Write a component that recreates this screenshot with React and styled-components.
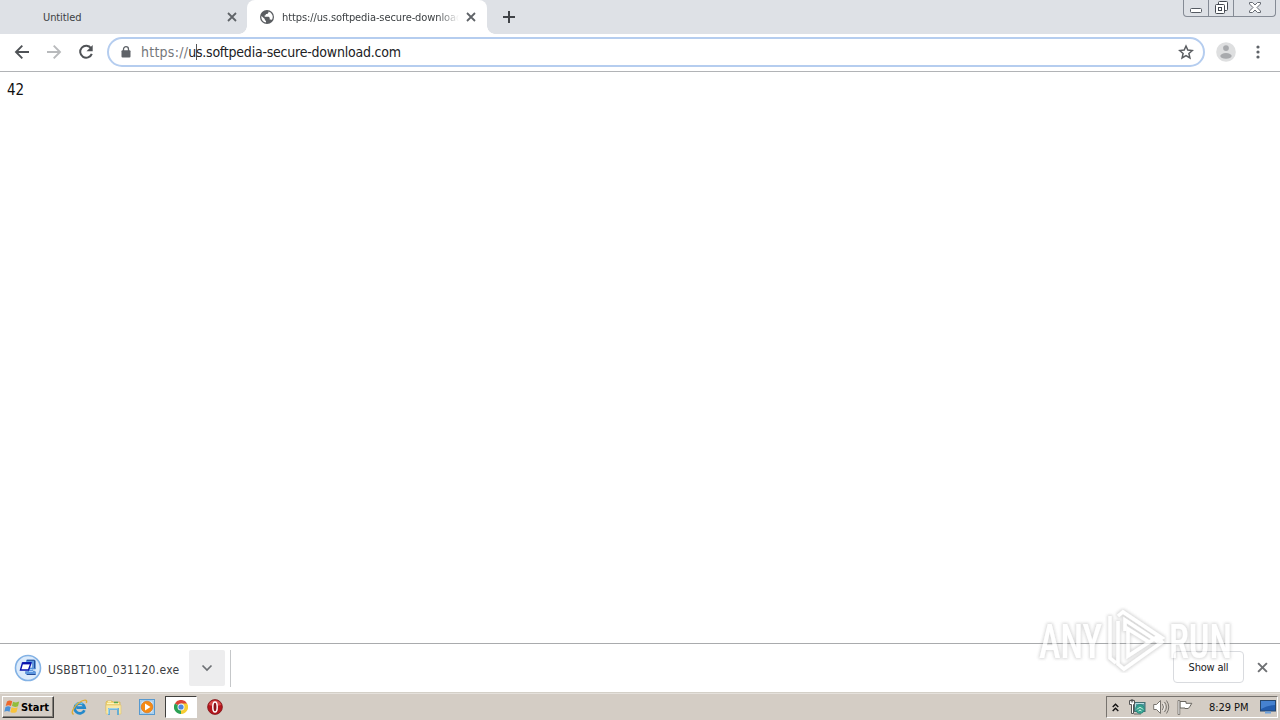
import React from "react";
import styled, { createGlobalStyle } from "styled-components";

const GlobalStyle = createGlobalStyle`
  body {
    margin: 0;
    overflow: hidden;
    background: #fff;
    font-family: "DejaVu Sans Condensed", "DejaVu Sans", sans-serif;
    font-stretch: condensed;
  }

  * {
    box-sizing: border-box;
  }

  svg {
    display: block;
    flex-shrink: 0;
  }
`;

const CloseIcon = ({ size = 10, color = "#5f6368" }) => (
  <svg width={size} height={size} viewBox="0 0 10 10">
    <path d="M1 1l8 8M9 1L1 9" stroke={color} strokeWidth="1.8" />
  </svg>
);

const GlobeIcon = () => (
  <svg width="14" height="14" viewBox="0 0 14 14">
    <circle cx="7" cy="7" r="7" fill="#5a5d61" />
    <path d="M1.500 6l3.300 3v1l1.200 1v1.600C3.300 12.200 1.300 9.800 1.300 7z" fill="#fff" />
    <path d="M8.500 1.500v1L7.300 3.900H5.800v1.400H4.700v1.400h4l1 1v1.900h1.500l.6.500a5.700 5.700 0 0 0-3.300-8.600z" fill="#fff" />
  </svg>
);

const BackIcon = ({ color = "#4f5256", flip }) => (
  <svg width="16" height="16" viewBox="0 0 16 16">
    <path
      d="M15 8H2M8.300 1.700L2 8l6.300 6.300"
      transform={flip ? "translate(16 0) scale(-1 1)" : undefined}
      fill="none"
      stroke={color}
      strokeWidth="1.900"
    />
  </svg>
);

const ReloadIcon = () => (
  <svg width="16" height="16" viewBox="0 0 16 16">
    <path d="M13.100 4.300A6 6 0 1 0 13.800 9.800" fill="none" stroke="#4f5256" strokeWidth="2" />
    <path d="M14.700 1v6.200H8.500z" fill="#4f5256" />
  </svg>
);

const LockIcon = () => (
  <svg width="10" height="12" viewBox="0 0 10 12">
    <path d="M2.500 5V3.200a2.500 2.500 0 0 1 5 0V5" fill="none" stroke="#5f6368" strokeWidth="1.300" />
    <rect x="0.500" y="4.300" width="9" height="7.200" rx="1" fill="#5f6368" />
  </svg>
);

const StarIcon = () => (
  <svg width="16" height="16" viewBox="0 0 16 16">
    <path
      d="M8 2l1.800 4.100 4.500.4-3.400 3 1 4.400L8 11.600l-3.900 2.300 1-4.400-3.400-3 4.500-.4z"
      fill="none"
      stroke="#5a5d61"
      strokeWidth="1.500"
    />
  </svg>
);

const AvatarIcon = () => (
  <svg width="20" height="20" viewBox="0 0 20 20">
    <circle cx="10" cy="10" r="9.800" fill="#dedfe0" />
    <circle cx="10" cy="6.100" r="2.900" fill="#a8aaad" />
    <ellipse cx="10" cy="13.900" rx="5.700" ry="2.800" fill="#a8aaad" />
  </svg>
);

const DotsIcon = () => (
  <svg width="4" height="14" viewBox="0 0 4 14">
    <circle cx="2" cy="2" r="1.600" fill="#5f6368" />
    <circle cx="2" cy="7" r="1.600" fill="#5f6368" />
    <circle cx="2" cy="12" r="1.600" fill="#5f6368" />
  </svg>
);

const MinimizeIcon = () => (
  <svg width="12" height="5" viewBox="0 0 12 5">
    <rect x="0.500" y="0.500" width="11" height="4" rx="1" fill="#fff" stroke="#555a62" />
  </svg>
);

const RestoreIcon = () => (
  <svg width="13" height="13" viewBox="0 0 13 13">
    <rect x="3.500" y="0.500" width="9" height="9" rx="1" fill="#fff" stroke="#444951" />
    <rect x="0.500" y="3.500" width="9" height="9" rx="1" fill="#fff" stroke="#444951" />
    <rect x="3.500" y="6.500" width="3" height="3" fill="#fff" stroke="#444951" />
  </svg>
);

const WindowCloseIcon = () => (
  <svg width="12" height="11" viewBox="0 0 12 11">
    <path
      d="M.5.500h3L6 3 8.500.500h3v1.500L8 5.500l3.500 3.500v1.500h-3L6 8l-2.500 2.500h-3V9L4 5.500.500 2z"
      fill="#fff"
      stroke="#666b73"
    />
  </svg>
);

// self-extracting archive: window and blue clamp in a round badge
const InstallerIcon = () => (
  <svg width="28" height="28" viewBox="0 0 28 28">
    <circle cx="14" cy="14" r="12.500" fill="#dcebfb" stroke="#83b2e5" strokeWidth="1.600" />
    <path d="M12.500 6h8l1 1v8h-3v2h2l1 1v2.500h-9l-1-1v-2h3V14h4V9h-6z" fill="#5c97e0" stroke="#4a84cc" strokeWidth=".6" />
    <path d="M13 6.300h7.500v8M13 20.500h8.500" fill="none" stroke="#234c99" />
    <path d="M15 17.500h4M15.500 15.500h3" stroke="#abd0f8" />
    <path d="M8.500 9h8.500l-2.500 7H6.500z" fill="#fff" stroke="#0812ae" strokeWidth="1.400" />
    <path d="M8.500 9.300H17" stroke="#0812ae" strokeWidth="2.200" />
  </svg>
);

const WindowsFlag = () => (
  <svg width="16" height="16" viewBox="0 0 16 16">
    <path d="M3 2.500Q5.500.700 8.200 2.300L7 7Q4.500 5.600 1.700 7z" fill="#ed682b" />
    <path d="M9 2.700q3 1.400 6.200-.1L14 7.200q-3 1.500-6-.1z" fill="#91bd3d" />
    <path d="M1.500 8Q4.200 6.600 6.700 8L5.500 12.700Q3 11.400.3 12.800z" fill="#4b91d7" />
    <path d="M7.600 8.200q3.100 1.400 6.100 0l-1.200 4.800q-3.200 1.700-6.100 0z" fill="#f8c33c" />
  </svg>
);

const ExplorerIcon = () => (
  <svg width="17" height="17" viewBox="0 0 17 17">
    <path
      d="M13.400 11.200A5 5 0 1 1 13.700 8.700H5.500"
      fill="none"
      stroke="#2489cb"
      strokeWidth="2.700"
    />
    <path d="M4.500 6a5 5 0 0 1 7-1" fill="none" stroke="#74cff0" strokeWidth="1.200" />
    <path d="M2.700 15.300C-1 14.500 3 7.200 8 3.700s8.800-3.500 7.300.400" fill="none" stroke="#dfad36" strokeWidth="1.400" />
  </svg>
);

const FolderIcon = () => (
  <svg width="17" height="17" viewBox="0 0 17 17">
    <path d="M1 3l1-1h5l1 1h7v9H1z" fill="#f1d675" stroke="#d4b451" strokeWidth=".7" />
    <path d="M2 4.500h12M3 2.700h3" stroke="#fff5bd" />
    <path d="M9 3.500h4" stroke="#57a84e" strokeWidth="1.500" />
    <path d="M1 6h15v9H1z" fill="#f8e8a6" stroke="#dfc56c" strokeWidth=".6" />
    <path d="M4 16v-6h9v6" fill="#d4cdc5" stroke="#67add4" strokeWidth="2" />
    <path d="M3.700 15V9.700h9" fill="none" stroke="#b9e2f3" strokeWidth=".8" />
  </svg>
);

const PlayerIcon = () => (
  <svg width="16" height="16" viewBox="0 0 16 16">
    <rect x=".5" y=".5" width="15" height="15" fill="#b6d8f2" stroke="#5799cf" />
    <rect x="2" y="2" width="12" height="12" fill="#d8eafa" stroke="#82b4db" strokeWidth=".6" />
    <circle cx="8" cy="8" r="5.800" fill="#f58a14" stroke="#d96c0b" strokeWidth=".6" />
    <path d="M6 4.500l5.500 3.500L6 11.500z" fill="#fff" />
  </svg>
);

const ChromeIcon = () => (
  <svg width="14" height="14" viewBox="0 0 14 14">
    <path d="M7 7L.9 3.500A7 7 0 0 1 13.100 3.500z" fill="#dc4436" />
    <path d="M7 7l6.100-3.500A7 7 0 0 1 7 14z" fill="#f7cd32" />
    <path d="M7 7v7A7 7 0 0 1 .9 3.500z" fill="#2ba154" />
    <path d="M7 3.500h6.100L10 8.700 7 14z" fill="#f7cd32" />
    <circle cx="7" cy="7" r="3.500" fill="#f4f5f7" />
    <circle cx="7" cy="7" r="2.600" fill="#4e87df" />
  </svg>
);

const OperaIcon = () => (
  <svg width="16" height="16" viewBox="0 0 16 16">
    <circle cx="8" cy="8" r="7.400" fill="#b5161c" stroke="#7d1519" strokeWidth=".8" />
    <path d="M1.800 6Q3 1.500 8 1.500T14.200 6Q8 8 1.800 6" fill="#d94d4b" />
    <ellipse cx="8" cy="8" rx="2.200" ry="5" fill="#8b1217" stroke="#fff" strokeWidth="1.500" />
  </svg>
);

const NetworkIcon = () => (
  <svg width="17" height="16" viewBox="0 0 17 16">
    <rect x="5.500" y="3.500" width="10.500" height="9" fill="#559ca6" stroke="#446e72" />
    <path d="M6.500 4.500H15M6.500 4.500v7" stroke="#b9dde0" />
    <path d="M5 15h7" stroke="#666" />
    <circle cx="11" cy="10" r="4.500" fill="#35a18f" stroke="#287f75" strokeWidth=".6" />
    <path d="M8 10.500q3-4 6 0M9.500 12q1.500-2 3 0" fill="none" stroke="#d8f6e8" />
    <path d="M.5 1.500h5v4h-1v9h-2v-9h-2z" fill="#fff" stroke="#555" />
    <path d="M2.300 0v3.500M3.700 0v3.500" stroke="#555" strokeWidth=".8" />
  </svg>
);

const SpeakerIcon = () => (
  <svg width="17" height="16" viewBox="0 0 17 16">
    <path d="M.700 5.500h2.800L7.500 1.500v13l-4-4H.7z" fill="#fff" stroke="#77736e" />
    <path d="M9.500 5q2 3 0 6M11.500 3q3.800 5 0 10M13.500 1.500q4.500 6.500 0 13" fill="none" stroke="#77736e" />
    <path d="M10.400 4.300q2.400 3.700 0 7.400" fill="none" stroke="#fff" strokeWidth=".7" />
  </svg>
);

const FlagIcon = () => (
  <svg width="16" height="16" viewBox="0 0 16 16">
    <path d="M3 2.500h6v1.800h5.800l-2 3.300-1.500 1.900H8V9H3z" fill="#fff" stroke="#69665f" />
    <path d="M1 1.500h1.800v14H1z" fill="#fff" stroke="#69665f" strokeWidth=".8" />
  </svg>
);

const DesktopIcon = () => (
  <svg width="16" height="14" viewBox="0 0 16 14">
    <rect x=".5" y=".5" width="15" height="10.500" fill="#245dae" stroke="#27476d" />
    <path d="M1 1h14v4Q8 5 1 9z" fill="#4682d0" />
    <path d="M5 12.500h6" stroke="#6fa2dd" strokeWidth="2" />
  </svg>
);

function App() {
  return (
    <Screen>
      <GlobalStyle />
      <TabStrip>
        <Tab $width={247} $indent={43}>
          <TabTitle $width={184}>Untitled</TabTitle>
          <CloseIcon />
        </Tab>
        <Tab $active $width={240} $indent={13}>
          <GlobeIcon />
          <TabTitle $width={177} $fade $gap={8}>
            https://us.softpedia-secure-download.com
          </TabTitle>
          <TabClose>
            <CloseIcon />
          </TabClose>
        </Tab>
        <NewTab>
          <svg width="12" height="12" viewBox="0 0 12 12">
            <path d="M6 0v12M0 6h12" stroke="#404347" strokeWidth="2" />
          </svg>
        </NewTab>
        <WindowButtons>
          <WindowButton $width={24}><MinimizeIcon /></WindowButton>
          <WindowButton $width={25}><RestoreIcon /></WindowButton>
          <WindowButton $width={42}><WindowCloseIcon /></WindowButton>
        </WindowButtons>
      </TabStrip>

      <Toolbar>
        <NavButtons>
          <BackIcon />
          <BackIcon color="#b8babc" flip />
          <ReloadIcon />
        </NavButtons>
        <AddressBar>
          <LockIcon />
          <Url>
            <Scheme>https://</Scheme>u<Caret />s.softpedia-secure-download.com
          </Url>
          <StarIcon />
        </AddressBar>
        <ToolbarEnd>
          <AvatarIcon />
          <DotsIcon />
        </ToolbarEnd>
      </Toolbar>

      <Page>42</Page>

      <DownloadShelf>
        <DownloadItem>
          <InstallerIcon />
          <FileName>USBBT100_031120.exe</FileName>
          <DownloadMenu>
            <svg width="12" height="8" viewBox="0 0 12 8">
              <path d="M1.500 1.500L6 6l4.500-4.500" fill="none" stroke="#6d7074" strokeWidth="1.700" />
            </svg>
          </DownloadMenu>
        </DownloadItem>
        <ShelfActions>
          <ShowAll>Show all</ShowAll>
          <CloseIcon size={11} color="#6f7174" />
        </ShelfActions>
      </DownloadShelf>

      <Taskbar>
        <StartButton>
          <WindowsFlag />
          Start
        </StartButton>
        <QuickLaunch>
          <TaskSlot><ExplorerIcon /></TaskSlot>
          <TaskSlot><FolderIcon /></TaskSlot>
          <TaskSlot><PlayerIcon /></TaskSlot>
          <TaskSlot $pressed><ChromeIcon /></TaskSlot>
          <TaskSlot><OperaIcon /></TaskSlot>
        </QuickLaunch>
        <Tray>
          <svg width="7" height="9" viewBox="0 0 7 9">
            <path d="M.7 4l2.800-2.800L6.300 4M.7 8l2.800-2.800L6.300 8" fill="none" stroke="#111" strokeWidth="1.400" />
          </svg>
          <TrayIcons>
            <NetworkIcon />
            <SpeakerIcon />
            <FlagIcon />
          </TrayIcons>
          <Clock>8:29 PM</Clock>
          <DesktopIcon />
        </Tray>
      </Taskbar>

      <Watermark viewBox="0 0 204 72">
        <defs>
          <filter id="halo" x="-10%" y="-15%" width="120%" height="130%">
            <feMorphology in="SourceAlpha" operator="dilate" radius="0.8" result="edge" />
            <feGaussianBlur in="edge" stdDeviation="1.6" result="blur" />
            <feFlood floodColor="#777" floodOpacity="0.42" />
            <feComposite in2="blur" operator="in" result="shade" />
            <feMerge>
              <feMergeNode in="shade" />
              <feMergeNode in="SourceGraphic" />
            </feMerge>
          </filter>
        </defs>
        <g filter="url(#halo)" opacity="0.66">
          <WatermarkText x="5" y="57" textLength="63" lengthAdjust="spacingAndGlyphs">ANY</WatermarkText>
          <WatermarkText x="135" y="57" textLength="63" lengthAdjust="spacingAndGlyphs">RUN</WatermarkText>
          <path d="M76 15v42l6 5M84 20v43l6 5 38-27-5-5-29 19V28l21 13" fill="none" stroke="#fff" strokeWidth="3.500" />
          <path d="M84 15l5-4 39 26-5 3-32-21v11" fill="none" stroke="#fff" strokeWidth="3.500" />
        </g>
      </Watermark>
    </Screen>
  );
}

const Screen = styled.div`
  position: relative;
  display: flex;
  flex-direction: column;
  width: 1280px;
  height: 720px;
  overflow: hidden;
  background: #fff;
`;

// tabs
const TabStrip = styled.div`
  display: flex;
  height: 34px;
  background: #dee1e6;
`;

const Tab = styled.div`
  position: relative;
  display: flex;
  align-items: center;
  width: ${({ $width }) => $width}px;
  padding-left: ${({ $indent }) => $indent}px;
  border-radius: 8px 8px 0 0;
  background: ${({ $active }) => ($active ? "#fff" : "transparent")};

  &::before,
  &::after {
    content: "";
    display: ${({ $active }) => ($active ? "block" : "none")};
    position: absolute;
    bottom: 0;
    width: 8px;
    height: 8px;
  }

  &::before {
    left: -8px;
    background: radial-gradient(circle at 0 0, transparent 7.5px, #fff 8px);
  }

  &::after {
    right: -8px;
    background: radial-gradient(circle at 100% 0, transparent 7.5px, #fff 8px);
  }
`;

const TabTitle = styled.div`
  width: ${({ $width }) => $width}px;
  margin-left: ${({ $gap }) => $gap || 0}px;
  overflow: hidden;
  white-space: nowrap;
  font-size: 11px;
  line-height: 16px;
  padding-top: 1px;
  letter-spacing: -0.1px;
  color: #3c4043;
  mask-image: ${({ $fade }) =>
    $fade ? "linear-gradient(to right, #000 88%, transparent)" : "none"};
`;

const TabClose = styled.div`
  margin-left: 7px;
`;

const NewTab = styled.div`
  display: flex;
  align-items: center;
  padding-left: 16px;
`;

const WindowButtons = styled.div`
  display: flex;
  height: 17px;
  margin: 0 4px 0 auto;
  border: 1px solid #858b95;
  border-top: none;
  border-radius: 0 0 4px 4px;
`;

const WindowButton = styled.div`
  display: flex;
  align-items: flex-end;
  justify-content: center;
  width: ${({ $width }) => $width}px;
  padding-bottom: 2px;

  & + & {
    border-left: 1px solid #858b95;
  }

  &:not(:nth-child(2)) {
    padding-bottom: 3px;
  }
`;

// toolbar
const Toolbar = styled.div`
  display: flex;
  align-items: center;
  height: 38px;
  padding-bottom: 1px;
  border-bottom: 1px solid #b1b3b6;
`;

const NavButtons = styled.div`
  display: flex;
  gap: 16px;
  width: 107px;
  padding-left: 14px;
`;

const AddressBar = styled.div`
  display: flex;
  align-items: center;
  width: 1098px;
  height: 30px;
  padding: 0 9px 0 12px;
  border: 2px solid #b5cdef;
  border-radius: 15px;
`;

const Url = styled.div`
  flex: 1;
  padding-left: 10px;
  font-size: 14px;
  line-height: 20px;
  letter-spacing: -0.22px;
  color: #202124;
  white-space: nowrap;
`;

const Scheme = styled.span`
  letter-spacing: 0.25px;
  color: #74777b;
`;

const Caret = styled.span`
  display: inline-block;
  width: 1px;
  height: 16px;
  margin-right: -1px;
  vertical-align: -3px;
  background: #555;
`;

const ToolbarEnd = styled.div`
  display: flex;
  align-items: center;
  gap: 20px;
  margin-left: 11px;
`;

const Page = styled.main`
  height: 571px;
  padding: 9px 7px;
  font-size: 15px;
  line-height: 18px;
  letter-spacing: -0.2px;
  color: #111;
`;

// downloads
const DownloadShelf = styled.div`
  display: flex;
  align-items: center;
  justify-content: space-between;
  height: 50px;
  padding: 0 12px 0 14px;
  border-top: 1px solid #a9abad;
  border-bottom: 1px solid #d4d0c8;
`;

const DownloadItem = styled.div`
  display: flex;
  align-items: center;
  width: 217px;
  height: 37px;
  border-right: 1px solid #c5c7c9;
`;

const FileName = styled.div`
  width: 141px;
  padding: 3px 0 0 6px;
  font-size: 12px;
  letter-spacing: 0.29px;
  white-space: nowrap;
  color: #3c4043;
`;

const DownloadMenu = styled.div`
  display: flex;
  align-items: center;
  justify-content: center;
  width: 36px;
  height: 36px;
  margin-left: 6px;
  border-radius: 2px;
  background: #ededee;
`;

const ShelfActions = styled.div`
  display: flex;
  align-items: center;
  gap: 13px;
  padding-bottom: 2px;
`;

const ShowAll = styled.div`
  width: 71px;
  height: 32px;
  border: 1px solid #d9dbdf;
  border-radius: 4px;
  font-size: 11px;
  line-height: 31px;
  text-align: center;
  letter-spacing: -0.2px;
  color: #202124;
`;

// taskbar
const Taskbar = styled.div`
  display: flex;
  align-items: center;
  height: 27px;
  padding: 0 2px 0 2px;
  background: #d4cdc5;
  border-top: 1px solid #e5e1dc;
`;

const StartButton = styled.div`
  display: flex;
  align-items: center;
  gap: 1px;
  width: 52px;
  height: 22px;
  padding-left: 1px;
  border: 1px solid;
  border-color: #fff #403f3d #403f3d #fff;
  box-shadow: inset -1px -1px #85817b;
  font-size: 11px;
  font-weight: bold;
  letter-spacing: -0.05px;
  color: #000;
`;

const QuickLaunch = styled.div`
  display: flex;
  gap: 2px;
  margin-left: 9px;
`;

const TaskSlot = styled.div`
  display: flex;
  align-items: center;
  justify-content: center;
  width: 32px;
  height: 22px;
  background: ${({ $pressed }) => ($pressed ? "#fff" : "transparent")};
  border: 1px solid transparent;
  border-color: ${({ $pressed }) => ($pressed ? "#403f3d #fff #fff #403f3d" : "transparent")};
`;

const Tray = styled.div`
  display: flex;
  align-items: center;
  width: 172px;
  height: 22px;
  margin-left: auto;
  padding-left: 5px;
  border: 1px solid;
  border-color: #77736e #fff #fff #77736e;
`;

const TrayIcons = styled.div`
  display: flex;
  gap: 7px;
  margin-left: 10px;
`;

const Clock = styled.div`
  width: 51px;
  margin-left: 16px;
  font-size: 11px;
  letter-spacing: -0.05px;
  white-space: nowrap;
  color: #111;
`;

// overlay logo
const Watermark = styled.svg`
  position: absolute;
  left: 1034px;
  top: 601px;
  width: 204px;
  height: 72px;
  pointer-events: none;
`;

const WatermarkText = styled.text`
  font-family: Roboto, "Liberation Sans", sans-serif;
  font-size: 48px;
  font-weight: 500;
  fill: #fff;
`;

export default App;
